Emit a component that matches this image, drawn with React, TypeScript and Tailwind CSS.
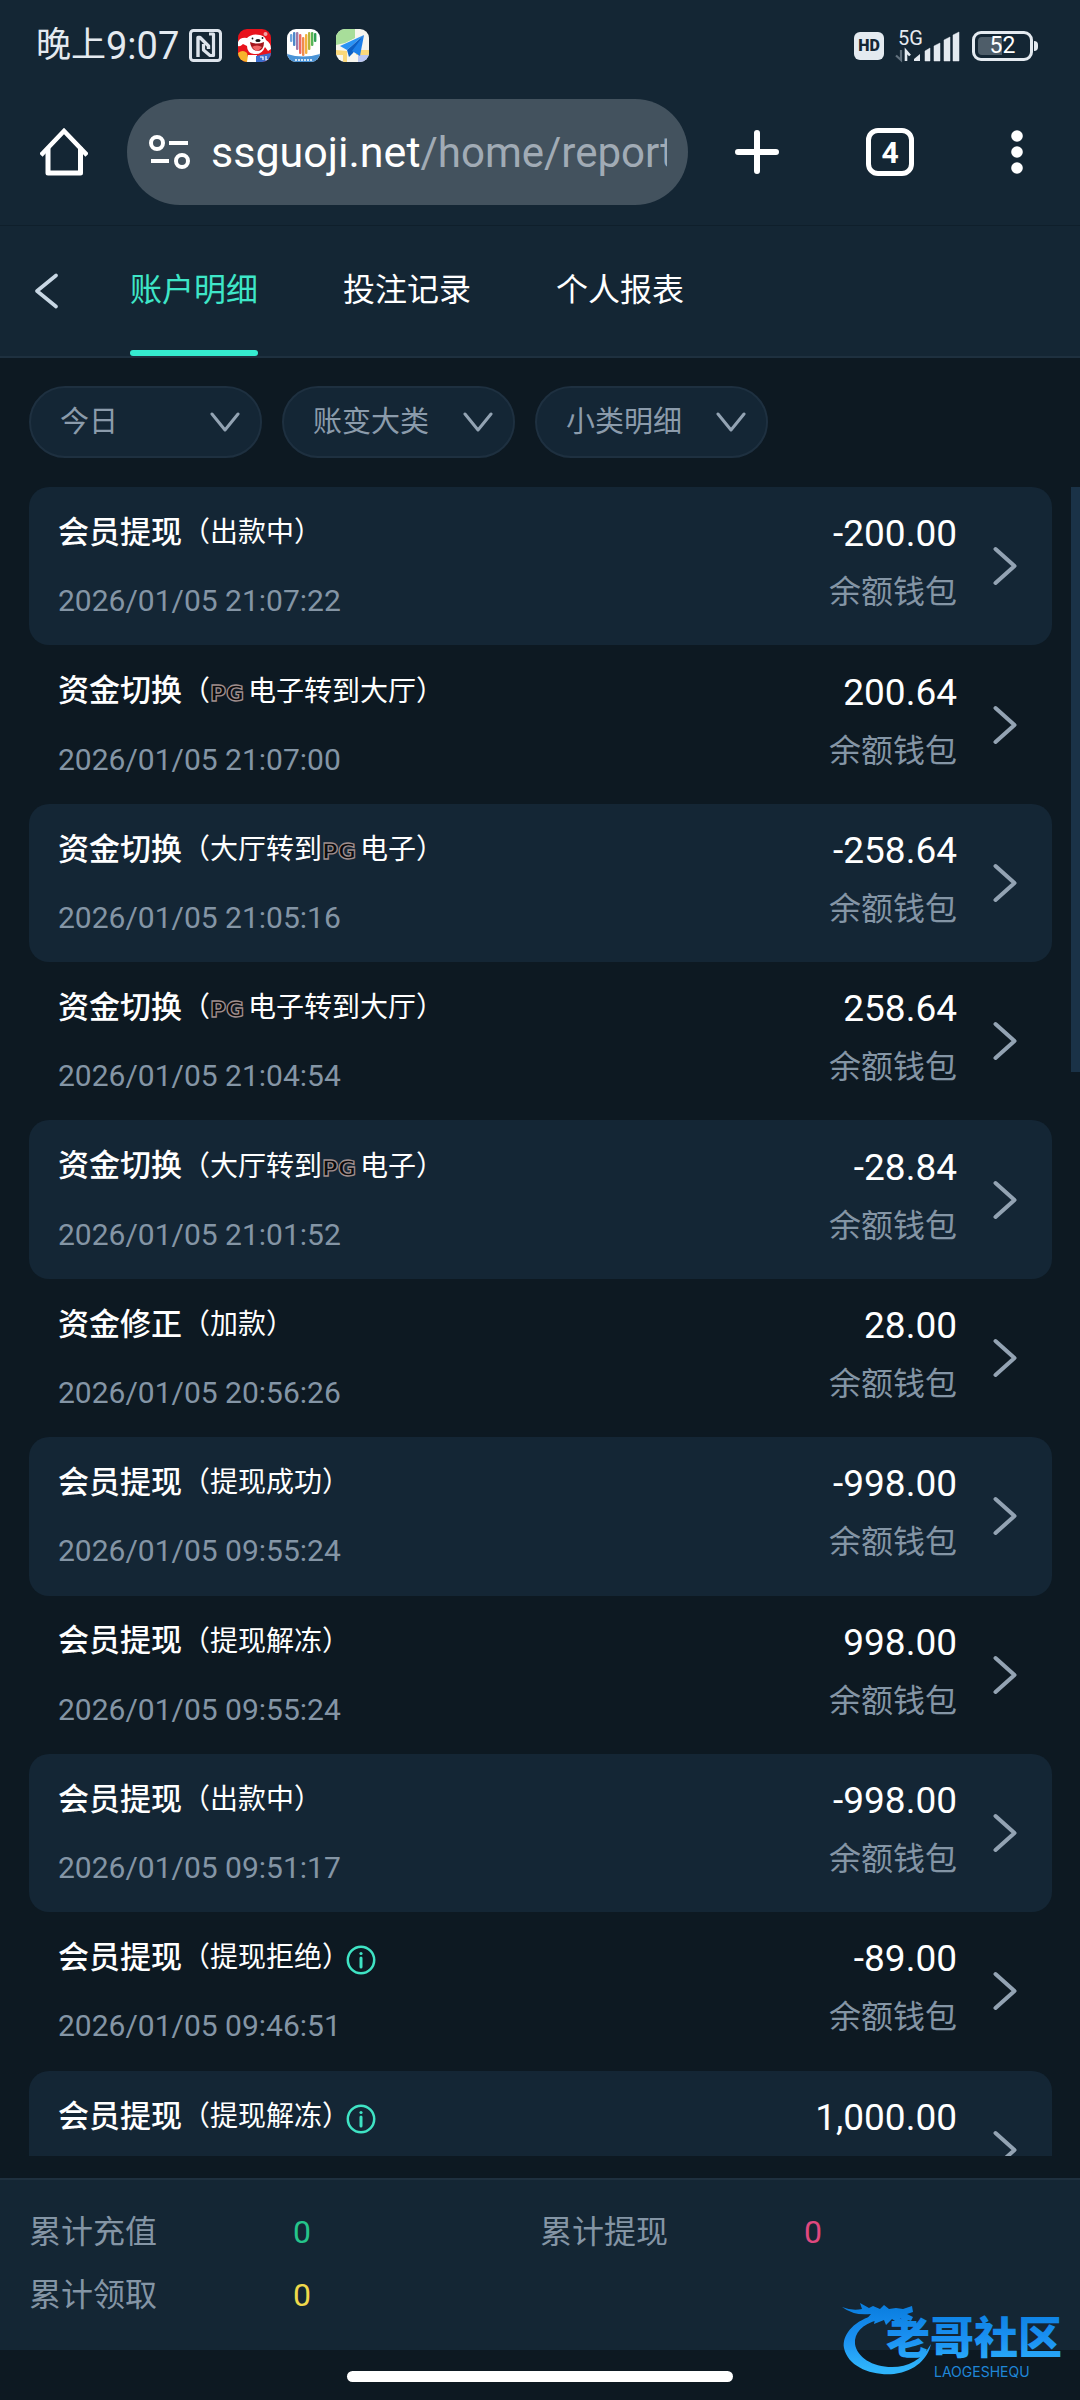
import React from "react";

type Entry = {
  title: string;
  detail: string;
  time: string;
  amount: string;
  info?: boolean;
};

const entries: Entry[] = [
  { title: "会员提现", detail: "出款中", time: "2026/01/05 21:07:22", amount: "-200.00" },
  { title: "资金切换", detail: "PG电子转到大厅", time: "2026/01/05 21:07:00", amount: "200.64" },
  { title: "资金切换", detail: "大厅转到PG电子", time: "2026/01/05 21:05:16", amount: "-258.64" },
  { title: "资金切换", detail: "PG电子转到大厅", time: "2026/01/05 21:04:54", amount: "258.64" },
  { title: "资金切换", detail: "大厅转到PG电子", time: "2026/01/05 21:01:52", amount: "-28.84" },
  { title: "资金修正", detail: "加款", time: "2026/01/05 20:56:26", amount: "28.00" },
  { title: "会员提现", detail: "提现成功", time: "2026/01/05 09:55:24", amount: "-998.00" },
  { title: "会员提现", detail: "提现解冻", time: "2026/01/05 09:55:24", amount: "998.00" },
  { title: "会员提现", detail: "出款中", time: "2026/01/05 09:51:17", amount: "-998.00" },
  { title: "会员提现", detail: "提现拒绝", time: "2026/01/05 09:46:51", amount: "-89.00", info: true },
  { title: "会员提现", detail: "提现解冻", time: "2026/01/05 09:46:51", amount: "1,000.00", info: true },
];

const tabs = ["账户明细", "投注记录", "个人报表"];
const filters = [
  { name: "日期", value: "今日" },
  { name: "大类", value: "账变大类" },
  { name: "小类", value: "小类明细" },
];
const totals = [
  { label: "累计充值", value: "0", color: "text-[#25c48b]" },
  { label: "累计提现", value: "0", color: "text-[#e0487f]" },
  { label: "累计领取", value: "0", color: "text-[#efd84b]" },
];

function NfcIcon() {
  return (
    <svg viewBox="0 0 33 33" className="size-[33px]" fill="none" stroke="#dde4ec" strokeWidth="3" strokeLinejoin="round">
      <rect x="1.5" y="1.5" width="30" height="30" rx="3" />
      <path d="M9 28V8.500H11L19.500 17V20" strokeWidth="3.400" />
      <path d="M14.500 15V21L21 26.500H24.500V5H20" strokeWidth="3.200" />
    </svg>
  );
}

function MascotApp() {
  return (
    <svg viewBox="0 0 33 33" className="size-[33px] rounded-[9px]">
      <rect width="33" height="33" fill="#e8131c" />
      <path d="M0 13Q2 8 9 9Q14 4 22 6Q27 7 28 11Q33 14 33 20L30 22L27 18Q24 26 16 25Q9 24 9 17L5 15Q2 18 0 17Z" fill="#fff" />
      <path d="M0 24Q5 20 9 24L11 33H0Z" fill="#f7b32b" />
      <path d="M10 26H19V33H9Z" fill="#fff" />
      <path d="M12 13Q19 16 26 13Q26 22 19 22Q13 21 12 13Z" fill="#a3141b" />
      <path d="M14 18Q19 15 24 18Q21 22 18 22Z" fill="#f26666" />
      <ellipse cx="20" cy="11.500" rx="2.600" ry="1.500" fill="#151515" />
      <circle cx="14.500" cy="9.500" r="0.900" fill="#151515" />
      <circle cx="24.500" cy="9" r="0.900" fill="#151515" />
      <circle cx="27.500" cy="5" r="2" fill="#f3a3a3" />
      <path d="M18 27L33 24V33H18Z" fill="#3d6fd0" />
      <path d="M22 28h3v3M28 27v4h3" stroke="#fff" strokeWidth="1.200" fill="none" />
    </svg>
  );
}

function HeartApp() {
  const bars = [
    [3, 5, 8, "#6fa6dc"],
    [6, 3, 14, "#4f87c9"],
    [9, 3, 18, "#a07aa8"],
    [12, 5, 20, "#ef6a5f"],
    [15, 8, 19, "#f08b4c"],
    [18, 5, 20, "#f4b13e"],
    [21, 3, 18, "#b9b43c"],
    [24, 3, 14, "#58b457"],
    [27, 4, 9, "#2fa055"],
  ] as const;
  return (
    <svg viewBox="0 0 33 33" className="size-[33px] rounded-[9px]">
      <rect width="33" height="33" fill="#fff" />
      <path d="M0 25Q16 30 33 25V33H0Z" fill="#4a93d6" />
      {bars.map(([x, y, h, fill]) => (
        <rect key={x} x={x} y={y} width="2.400" height={h} rx="1" fill={fill} />
      ))}
      <path d="M8 31h17" stroke="#fff" strokeWidth="1.600" strokeDasharray="2 1" />
    </svg>
  );
}

function MapApp() {
  return (
    <svg viewBox="0 0 33 33" className="size-[33px] rounded-[9px]">
      <rect width="33" height="33" fill="#f7f6ee" />
      <path d="M0 0H19V9L9 14L0 16Z" fill="#a8de9a" />
      <path d="M0 21L11 22V33H7V26H0Z" fill="#fbd87a" />
      <path d="M22 21H33V26H20Z" fill="#fbd87a" />
      <path d="M22 26H33V33H22Z" fill="#b9c6f2" />
      <path d="M28 6L4 17L11 21Z" fill="#2a93f4" />
      <path d="M28 6L11 21L13 28L17 24Z" fill="#0c5fc4" />
      <path d="M28 6L16 22L24 27Z" fill="#1c7fe8" />
    </svg>
  );
}

function SignalIcon() {
  return (
    <svg viewBox="0 0 64 34" className="h-[34px] w-16 overflow-visible">
      <text x="2" y="16" fontFamily="Roboto, sans-serif" fontSize="20" fill="#e4eaf0">
        5G
      </text>
      <path d="M5 21V31L0 26.500" stroke="#61707d" strokeWidth="2.200" fill="none" />
      <path d="M10 32V22L14 26.500" stroke="#e4eaf0" strokeWidth="2.600" fill="none" />
      <path d="M18 32V30L24 25V32Z" fill="#e4eaf0" />
      <path d="M29 32V22L34 19V32ZM38 32V17L44 14V32ZM48 32V11L54 8V32ZM57 32V6L63 3V32Z" fill="#e4eaf0" stroke="#e4eaf0" strokeWidth="0.500" strokeLinejoin="round" />
    </svg>
  );
}

function PgMark() {
  return (
    <svg viewBox="0 0 38 20" className="inline-block h-5 w-[38px] overflow-visible align-baseline" role="img" aria-label="PG">
      <text x="0" y="20" fontFamily="DejaVu Sans, sans-serif" fontSize="22" fontWeight="700" fill="#0a0a0c" stroke="#a08f8e" strokeWidth="1.300">
        PG
      </text>
    </svg>
  );
}

function Detail({ text }: { text: string }) {
  const parts = text.split("PG");
  return (
    <span className="text-[28px]">
      （
      {parts.map((part, i) => (
        <React.Fragment key={i}>
          {i > 0 && <PgMark />}
          {part}
        </React.Fragment>
      ))}
      ）
    </span>
  );
}

function InfoIcon() {
  return (
    <svg viewBox="0 0 30 30" className="size-[30px]" fill="none" stroke="#3fe3c4" strokeWidth="2.500">
      <circle cx="15" cy="15" r="13.200" />
      <path d="M15 13V22" strokeWidth="3" strokeLinecap="round" />
      <circle cx="15" cy="8.500" r="1.600" fill="#3fe3c4" stroke="none" />
    </svg>
  );
}

function Row({ entry, shaded }: { entry: Entry; shaded: boolean }) {
  return (
    <li className={shaded ? "rounded-[20px] bg-[#142635]" : "rounded-[20px]"}>
      <button type="button" className="flex h-full w-full items-center pr-[35px] pl-[29px] text-left">
        <span className="flex flex-1 flex-col gap-7 pt-0.5">
          <span className="flex h-10 items-center text-white">
            <span className="text-[31px] font-medium">{entry.title}</span>
            <Detail text={entry.detail} />
            {entry.info && (
              <span className="-ml-1 pt-1">
                <InfoIcon />
              </span>
            )}
          </span>
          <span className="text-[30px] leading-10 text-[#8495a5]">{entry.time}</span>
        </span>
        <span className="flex flex-col items-end gap-[18px] pb-1.5">
          <span className="text-[37px] leading-10 text-white">{entry.amount}</span>
          <span className="text-[32px] leading-10 text-[#8495a5]">余额钱包</span>
        </span>
        <svg viewBox="0 0 24 40" className="ml-9 h-10 w-6" fill="none" stroke="#93a3b3" strokeWidth="4" strokeLinecap="round" strokeLinejoin="round">
          <path d="M2.500 3L21.500 20L2.500 37" />
        </svg>
      </button>
    </li>
  );
}

function Watermark() {
  return (
    <svg viewBox="0 0 226 78" className="pointer-events-none absolute right-3 bottom-[22px] h-[78px] w-[226px] overflow-visible" role="img" aria-label="老哥社区">
      <defs>
        <linearGradient id="wm" x1="0" y1="0" x2="0" y2="76" gradientUnits="userSpaceOnUse">
          <stop offset="0.100" stopColor="#0b7fe0" />
          <stop offset="0.500" stopColor="#1a90f2" />
          <stop offset="0.900" stopColor="#2fb4fb" />
        </linearGradient>
      </defs>
      <g fill="url(#wm)">
        <path d="M30 16C10 22 0 36 2 48C6 67 30 76 52 74C74 71 86 58 89 44C80 60 66 67 50 67C30 67 15 57 13 44C12 33 20 24 36 20Z" />
        <path d="M0 7Q10 11 20 9L18 3L27 8L31 6L38 9L42 5L47 9L54 8L61 9L70 6L71 12L65 14L71 17L69 21L58 18L64 24L56 23L50 19L44 25L42 20L32 24L33 19L22 22L29 14Q12 16 0 7Z" />
        <text x="44" y="54" fontFamily="Noto Sans CJK SC, sans-serif" fontSize="44" fontWeight="900">
          老哥社区
        </text>
      </g>
      <text x="92" y="77" fontFamily="Inter, sans-serif" fontSize="14" fill="#1f86d8">
        LAOGESHEQU
      </text>
    </svg>
  );
}

export default function App() {
  return (
    <div className="relative flex h-screen flex-col overflow-hidden bg-[#0d1922] font-[Roboto,'Noto_Sans_CJK_SC',sans-serif]">
      <header className="bg-[#142634]">
        <div className="flex h-[91px] items-center pr-[42px] pl-9 text-[#e4eaf0]">
          <div className="flex items-center pt-0.5">
            <span className="text-[35px]">晚上</span>
            <span className="text-[38px]">9:07</span>
          </div>
          <div className="ml-2.5 flex items-center gap-4">
            <NfcIcon />
            <MascotApp />
            <HeartApp />
            <MapApp />
          </div>
          <div className="ml-auto flex items-center gap-3">
            <span className="flex h-7 w-[30px] items-center justify-center rounded-md bg-[#e4eaf0] text-[16px] leading-6 font-black text-[#142634]">HD</span>
            <SignalIcon />
            <div className="flex items-center gap-px">
              <div className="flex h-[30px] w-[61px] rounded-[9px] border-3 border-[#e4eaf0] p-[3px]">
                <span className="flex h-full w-full items-center justify-center rounded-sm bg-linear-to-r from-[#4e5d69] from-50% to-transparent to-50% text-[23px] leading-none text-white">52</span>
              </div>
              <span className="h-2.5 w-1 rounded-r-sm bg-[#e4eaf0]" />
            </div>
          </div>
        </div>

        <div className="flex items-center pt-2 pr-[45px] pb-5 pl-10">
          <button type="button" aria-label="主页">
            <svg viewBox="0 0 48 48" className="size-12" fill="none" stroke="#fff" strokeWidth="5" strokeLinecap="round" strokeLinejoin="round">
              <path d="M2.500 25.500L24 3L45.500 25.500" strokeLinecap="square" strokeLinejoin="miter" strokeWidth="4.500" />
              <path d="M8 21V45H40.500V21" />
            </svg>
          </button>
          <button type="button" aria-label="地址栏" className="ml-[39px] flex h-[106px] min-w-0 flex-1 items-center rounded-full bg-[#43525e] pr-[21px] pl-[22px]">
            <svg viewBox="0 0 42 36" className="h-9 w-[42px] shrink-0" fill="none" stroke="#fff" strokeWidth="4">
              <circle cx="8" cy="9" r="6" />
              <path d="M20 9H39M2 27H20" />
              <circle cx="33" cy="27" r="6" />
            </svg>
            <span className="ml-5 min-w-0 flex-1 overflow-hidden text-left text-[43px] whitespace-nowrap text-white">
              ssguoji.net<span className="text-[42px] text-[#a1abb5]">/home/report</span>
            </span>
          </button>
          <button type="button" aria-label="新标签页" className="ml-[47px]">
            <svg viewBox="0 0 44 44" className="size-11" stroke="#fff" strokeWidth="6" strokeLinecap="round">
              <path d="M22 3V41M3 22H41" />
            </svg>
          </button>
          <button type="button" aria-label="标签页" className="ml-[87px] flex size-12 items-center justify-center rounded-xl border-5 border-white text-[30px] font-bold text-white">
            4
          </button>
          <button type="button" aria-label="菜单" className="ml-[85px]">
            <svg viewBox="0 0 36 48" className="h-12 w-9" fill="#fff">
              <circle cx="18" cy="8" r="5.800" />
              <circle cx="18" cy="24" r="5.800" />
              <circle cx="18" cy="40" r="5.800" />
            </svg>
          </button>
        </div>

        <nav className="flex h-[133px] items-stretch border-t border-b-2 border-t-[#0f1f2b] border-b-[#1e303f] pl-[33px]">
          <button type="button" aria-label="返回">
            <svg viewBox="0 0 26 36" className="h-9 w-[26px]" fill="none" stroke="#c8d7e4" strokeWidth="3.600" strokeLinecap="round" strokeLinejoin="round">
              <path d="M23 2.500L4 18L23 33.500" />
            </svg>
          </button>
          <div className="ml-[71px] flex gap-[85px]">
            {tabs.map((tab, i) => (
              <button
                key={tab}
                type="button"
                aria-current={i === 0 ? "page" : undefined}
                className={
                  i === 0
                    ? "flex flex-col text-[32px] text-[#3ee6c8] after:h-1.5 after:w-full after:rounded-sm after:bg-[#35ecd0]"
                    : "flex flex-col text-[32px] text-white"
                }
              >
                <span className="flex h-[124px] items-center pt-1">{tab}</span>
              </button>
            ))}
          </div>
        </nav>
      </header>

      <div className="flex gap-5 px-[29px] pt-7 pb-[29px]">
        {filters.map((filter) => (
          <label key={filter.name} className="relative flex h-[72px] w-[233px] items-center">
            <select aria-label={filter.name} className="h-full w-full appearance-none rounded-full border-2 border-[#1e3040] bg-[#142635] pt-0.5 pl-[29px] text-[29px] text-[#8b9bab]">
              <option>{filter.value}</option>
            </select>
            <svg viewBox="0 0 30 22" className="pointer-events-none absolute right-[22px] h-[22px] w-[30px]" fill="none" stroke="#93a3b3" strokeWidth="3" strokeLinecap="round" strokeLinejoin="round">
              <path d="M2 3L15 19L28 3" />
            </svg>
          </label>
        ))}
      </div>

      <main className="flex min-h-0 flex-1 overflow-hidden">
        <ul className="ml-[29px] grid h-[1742px] flex-1 auto-rows-fr">
          {entries.map((entry, i) => (
            <Row key={i} entry={entry} shaded={i % 2 === 0} />
          ))}
        </ul>
        <div className="ml-[19px] h-[585px] w-[9px] bg-[#1a3247]" />
      </main>

      <footer className="mt-[22px] border-t-2 border-[#1e303f] bg-[#142634] px-[29px] pt-5 pb-6">
        <dl className="grid grid-cols-2">
          {totals.map((total) => (
            <div key={total.label} className="flex h-[63px] items-center text-[32px]">
              <dt className="w-[264px] text-[#8495a5]">{total.label}</dt>
              <dd className={total.color}>{total.value}</dd>
            </div>
          ))}
        </dl>
      </footer>
      <div className="flex h-[50px] justify-center pt-[21px]">
        <div className="h-[11px] w-[386px] rounded-full bg-white" />
      </div>
      <Watermark />
    </div>
  );
}
